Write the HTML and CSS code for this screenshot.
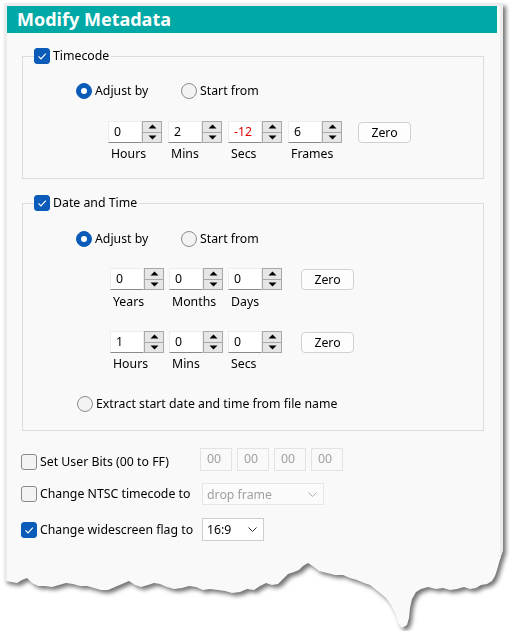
FILE: index.html
```html
<!DOCTYPE html>
<html>
<head>
<meta charset="utf-8">
<link rel="stylesheet" href="styles.css">
</head>
<body>
<div class="page">
  <div class="frame">
    <div class="header">Modify Metadata</div>

    <fieldset class="group group-tc">
      <legend><span class="cb on"><svg width="16" height="16" viewBox="0 0 16 16"><polyline points="4.5,8.3 7,10.8 11.8,5.6" fill="none" stroke="#fff" stroke-width="1.2"/></svg></span><span>Timecode</span></legend>
      <div class="radios">
        <div class="ritem first"><span class="radio on"></span>Adjust by</div>
        <div class="ritem"><span class="radio"></span>Start from</div>
      </div>
      <div class="spin-row tc-row">
        <div class="spin-col"><div class="spin"><div class="spin-input">0</div><div class="spin-btns"><span><svg width="9" height="5"><path d="M0.5 4.5 L4.5 0.5 L8.5 4.5Z" fill="#000"/></svg></span><span><svg width="9" height="5"><path d="M0.5 0.5 L4.5 4.5 L8.5 0.5Z" fill="#000"/></svg></span></div></div><div class="spin-label">Hours</div></div>
        <div class="spin-col"><div class="spin"><div class="spin-input">2</div><div class="spin-btns"><span><svg width="9" height="5"><path d="M0.5 4.5 L4.5 0.5 L8.5 4.5Z" fill="#000"/></svg></span><span><svg width="9" height="5"><path d="M0.5 0.5 L4.5 4.5 L8.5 0.5Z" fill="#000"/></svg></span></div></div><div class="spin-label">Mins</div></div>
        <div class="spin-col"><div class="spin"><div class="spin-input neg">-12</div><div class="spin-btns"><span><svg width="9" height="5"><path d="M0.5 4.5 L4.5 0.5 L8.5 4.5Z" fill="#000"/></svg></span><span><svg width="9" height="5"><path d="M0.5 0.5 L4.5 4.5 L8.5 0.5Z" fill="#000"/></svg></span></div></div><div class="spin-label">Secs</div></div>
        <div class="spin-col"><div class="spin"><div class="spin-input">6</div><div class="spin-btns"><span><svg width="9" height="5"><path d="M0.5 4.5 L4.5 0.5 L8.5 4.5Z" fill="#000"/></svg></span><span><svg width="9" height="5"><path d="M0.5 0.5 L4.5 4.5 L8.5 0.5Z" fill="#000"/></svg></span></div></div><div class="spin-label">Frames</div></div>
        <div class="zero zero-tc">Zero</div>
      </div>
    </fieldset>

    <fieldset class="group group-dt">
      <legend><span class="cb on"><svg width="16" height="16" viewBox="0 0 16 16"><polyline points="4.5,8.3 7,10.8 11.8,5.6" fill="none" stroke="#fff" stroke-width="1.2"/></svg></span><span>Date and Time</span></legend>
      <div class="radios radios-dt">
        <div class="ritem first"><span class="radio on"></span>Adjust by</div>
        <div class="ritem"><span class="radio"></span>Start from</div>
      </div>
      <div class="spin-row dt-row1">
        <div class="spin-col"><div class="spin"><div class="spin-input">0</div><div class="spin-btns"><span><svg width="9" height="5"><path d="M0.5 4.5 L4.5 0.5 L8.5 4.5Z" fill="#000"/></svg></span><span><svg width="9" height="5"><path d="M0.5 0.5 L4.5 4.5 L8.5 0.5Z" fill="#000"/></svg></span></div></div><div class="spin-label lbl-dt">Years</div></div>
        <div class="spin-col"><div class="spin"><div class="spin-input">0</div><div class="spin-btns"><span><svg width="9" height="5"><path d="M0.5 4.5 L4.5 0.5 L8.5 4.5Z" fill="#000"/></svg></span><span><svg width="9" height="5"><path d="M0.5 0.5 L4.5 4.5 L8.5 0.5Z" fill="#000"/></svg></span></div></div><div class="spin-label lbl-dt">Months</div></div>
        <div class="spin-col"><div class="spin"><div class="spin-input">0</div><div class="spin-btns"><span><svg width="9" height="5"><path d="M0.5 4.5 L4.5 0.5 L8.5 4.5Z" fill="#000"/></svg></span><span><svg width="9" height="5"><path d="M0.5 0.5 L4.5 4.5 L8.5 0.5Z" fill="#000"/></svg></span></div></div><div class="spin-label lbl-dt">Days</div></div>
        <div class="zero zero-dt">Zero</div>
      </div>
      <div class="spin-row dt-row2">
        <div class="spin-col"><div class="spin"><div class="spin-input">1</div><div class="spin-btns"><span><svg width="9" height="5"><path d="M0.5 4.5 L4.5 0.5 L8.5 4.5Z" fill="#000"/></svg></span><span><svg width="9" height="5"><path d="M0.5 0.5 L4.5 4.5 L8.5 0.5Z" fill="#000"/></svg></span></div></div><div class="spin-label">Hours</div></div>
        <div class="spin-col"><div class="spin"><div class="spin-input">0</div><div class="spin-btns"><span><svg width="9" height="5"><path d="M0.5 4.5 L4.5 0.5 L8.5 4.5Z" fill="#000"/></svg></span><span><svg width="9" height="5"><path d="M0.5 0.5 L4.5 4.5 L8.5 0.5Z" fill="#000"/></svg></span></div></div><div class="spin-label">Mins</div></div>
        <div class="spin-col"><div class="spin"><div class="spin-input">0</div><div class="spin-btns"><span><svg width="9" height="5"><path d="M0.5 4.5 L4.5 0.5 L8.5 4.5Z" fill="#000"/></svg></span><span><svg width="9" height="5"><path d="M0.5 0.5 L4.5 4.5 L8.5 0.5Z" fill="#000"/></svg></span></div></div><div class="spin-label">Secs</div></div>
        <div class="zero zero-dt">Zero</div>
      </div>
      <div class="extract">
        <div class="ritem"><span class="radio"></span>Extract start date and time from file name</div>
      </div>
    </fieldset>

    <div class="opt-row row-bits">
      <div class="opt-label"><span class="cb"></span>Set User Bits (00 to FF)</div>
      <div class="bits">
        <div class="bit">00</div>
        <div class="bit">00</div>
        <div class="bit">00</div>
        <div class="bit">00</div>
      </div>
    </div>
    <div class="opt-row row-ntsc">
      <div class="opt-label"><span class="cb"></span>Change NTSC timecode to</div>
      <div class="select disabled select-ntsc"><span>drop frame</span><svg width="9" height="5"><polyline points="0.5,0.5 4.5,4.5 8.5,0.5" fill="none" stroke="#b0b0b0" stroke-width="1"/></svg></div>
    </div>
    <div class="opt-row row-wide">
      <div class="opt-label"><span class="cb on"><svg width="16" height="16" viewBox="0 0 16 16"><polyline points="4.5,8.3 7,10.8 11.8,5.6" fill="none" stroke="#fff" stroke-width="1.2"/></svg></span>Change widescreen flag to</div>
      <div class="select select-wide"><span>16:9</span><svg width="9" height="5"><polyline points="0.5,0.5 4.5,4.5 8.5,0.5" fill="none" stroke="#333" stroke-width="1"/></svg></div>
    </div>
  </div>
</div>
</body>
</html>
```

FILE: styles.css
```css
* {
  box-sizing: border-box;
}

html, body {
  margin: 0;
  background: #ffffff;
}

body {
  font-family: "Noto Sans", "Segoe UI", sans-serif;
  font-size: 12.3px;
  color: #000000;
}

.page {
  width: 512px;
  padding: 3px 0 0 4px;
  filter: drop-shadow(3px 3px 2px rgba(0, 0, 0, 0.55));
}

.frame {
  width: 499px;
  height: 628px;
  border: 3px solid #ececec;
  background: #f9f9f9;
  clip-path: polygon(0px 0px, 499px 0px, 499px 547px, 497px 553px, 495px 560px, 493px 567px, 491px 573px, 488px 578px, 483px 581px, 477px 582px, 472px 585px, 466px 586px, 460px 584px, 453px 586px, 446px 587px, 439px 585px, 432px 586px, 424px 584px, 417px 586px, 412px 589px, 408px 596px, 406px 605px, 405px 615px, 403px 622px, 398px 625px, 394px 620px, 391px 610px, 387px 602px, 382px 595px, 376px 590px, 371px 586px, 366px 582px, 360px 580px, 353px 577px, 346px 575px, 339px 572px, 331px 572px, 323px 570px, 315px 568px, 310px 564px, 304px 560px, 299px 563px, 295px 567px, 290px 569px, 284px 571px, 279px 576px, 274px 581px, 268px 582px, 262px 580px, 256px 583px, 250px 587px, 243px 586px, 236px 589px, 228px 590px, 221px 588px, 214px 587px, 206px 586px, 199px 587px, 192px 584px, 185px 583px, 178px 585px, 170px 586px, 163px 584px, 156px 581px, 150px 580px, 144px 582px, 137px 584px, 131px 582px, 125px 578px, 118px 581px, 111px 584px, 104px 587px, 97px 587px, 90px 585px, 83px 583px, 76px 583px, 69px 581px, 62px 580px, 55px 582px, 48px 584px, 41px 583px, 34px 583px, 28px 580px, 23px 575px, 18px 577px, 13px 580px, 7px 579px, 2px 578px, 0px 577px);
}

.header {
  height: 27px;
  margin-right: 3px;
  background: #00a9a6;
  color: #ffffff;
  font-weight: 700;
  font-size: 18px;
  line-height: 27px;
  padding-left: 10px;
}

.group {
  margin: 15px 16px 0 15px;
  padding: 0 0 16px 0;
  border: 1px solid #dcdcdc;
  min-width: 0;
}

.group-dt {
  margin-top: 16px;
  padding-bottom: 18px;
}

.group legend {
  display: flex;
  align-items: center;
  gap: 3px;
  height: 16px;
  line-height: 16px;
  margin-left: 11px;
  padding: 0 2px 0 0;
}

.cb {
  display: inline-block;
  width: 16px;
  height: 16px;
  flex: none;
  border: 1px solid #8a8a8a;
  border-radius: 3px;
  background: #f3f3f3;
}

.cb svg {
  display: block;
  margin: -1px;
}

.cb.on {
  background: #0b5cb8;
  border-color: #0b5cb8;
}

.radios {
  display: flex;
  align-items: center;
  height: 16px;
  margin: 19px 0 0 53px;
}

.radios-dt {
  margin-top: 20px;
}

.ritem {
  display: flex;
  align-items: center;
  gap: 3px;
  line-height: 16px;
}

.ritem.first {
  width: 105px;
}

.radio {
  display: flex;
  align-items: center;
  justify-content: center;
  width: 16px;
  height: 16px;
  flex: none;
  border: 1px solid #8a8a8a;
  border-radius: 50%;
  background: #f3f3f3;
}

.radio.on {
  background: #0b5cb8;
  border-color: #0b5cb8;
}

.radio.on::after {
  content: "";
  width: 6px;
  height: 6px;
  border-radius: 50%;
  background: #ffffff;
}

.spin-row {
  display: flex;
  align-items: flex-start;
  gap: 6px;
}

.tc-row {
  margin: 22px 0 0 85px;
}

.dt-row1 {
  margin: 21px 0 0 87px;
  gap: 5px;
}

.dt-row2 {
  margin: 21px 0 0 87px;
  gap: 5px;
}

.spin-col {
  width: 54px;
}

.spin {
  display: flex;
  height: 22px;
}

.spin-input {
  width: 34px;
  background: #ffffff;
  border: 1px solid #ededed;
  border-bottom-color: #8a8a8a;
  padding-left: 5px;
  line-height: 20px;
  color: #000000;
}

.spin-input.neg {
  color: #e00000;
}

.spin-btns {
  width: 20px;
  display: flex;
  flex-direction: column;
  gap: 1px;
  border: 1px solid #a8a8a8;
  background: #a8a8a8;
}

.spin-btns span {
  flex: 1;
  display: flex;
  align-items: center;
  justify-content: center;
  background: #e6e6e6;
}

.spin-btns svg {
  display: block;
}

.spin-label {
  margin-top: 3px;
  padding-left: 3px;
  line-height: 16px;
}

.lbl-dt {
  margin-top: 4px;
}

.zero {
  width: 53px;
  height: 21px;
  margin-top: 1px;
  border: 1px solid #d0d0d0;
  border-radius: 4px;
  background: #fdfdfd;
  text-align: center;
  line-height: 19px;
  color: #000000;
}

.zero-tc {
  margin-left: 10px;
}

.zero-dt {
  margin-left: 14px;
}

.extract {
  display: flex;
  margin: 24px 0 0 54px;
  height: 16px;
}

.opt-row {
  display: flex;
  align-items: center;
  margin-left: 14px;
}

.row-bits {
  margin-top: 17px;
  height: 23px;
}

.row-bits .opt-label {
  margin-top: 5px;
}

.row-ntsc {
  margin-top: 12px;
  height: 22px;
}

.row-wide {
  margin-top: 13px;
  height: 23px;
}

.opt-label {
  width: 179px;
  display: flex;
  align-items: center;
  gap: 3px;
  line-height: 16px;
  white-space: nowrap;
}

.bits {
  display: flex;
  gap: 5px;
}

.bit {
  width: 32px;
  height: 23px;
  border: 1px solid #e3e3e3;
  background: #f9f9f9;
  color: #a0a0a0;
  padding-left: 6px;
  line-height: 19px;
}

.select {
  margin-left: 2px;
  height: 22px;
  display: flex;
  align-items: center;
  justify-content: space-between;
  border: 1px solid #cdcdcd;
  background: #ffffff;
  padding: 0 6px 0 4px;
}

.select svg {
  display: block;
}

.select.disabled {
  border-color: #e6e6e6;
  background: #fbfbfb;
  color: #a0a0a0;
}

.select-ntsc {
  width: 122px;
}

.select-wide {
  width: 62px;
  height: 23px;
}
```
